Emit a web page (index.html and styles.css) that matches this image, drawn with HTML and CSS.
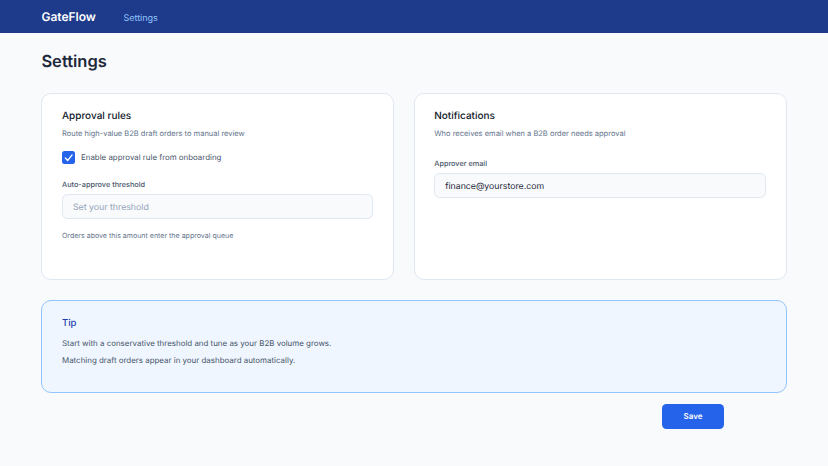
FILE: index.html
```html
<!DOCTYPE html>
<html lang="en">
<head>
<meta charset="utf-8">
<title>GateFlow Settings</title>
<link rel="stylesheet" href="styles.css">
</head>
<body>
<header class="topbar">
  <span class="brand">GateFlow</span>
  <a class="nav-link">Settings</a>
</header>
<main class="page">
  <h1 class="page-title">Settings</h1>
  <div class="cards">
    <section class="card">
      <h2 class="card-title">Approval rules</h2>
      <p class="card-sub">Route high-value B2B draft orders to manual review</p>
      <div class="check-row">
        <span class="checkbox">
          <svg viewBox="0 0 24 24" width="13.5" height="13.5"><path d="M6 12.5l4 4.5 8-10" fill="none" stroke="#fff" stroke-width="2.4" stroke-linecap="round" stroke-linejoin="round"/></svg>
        </span>
        <span class="check-label">Enable approval rule from onboarding</span>
      </div>
      <label class="field-label">Auto-approve threshold</label>
      <div class="input placeholder">Set your threshold</div>
      <p class="hint">Orders above this amount enter the approval queue</p>
    </section>
    <section class="card">
      <h2 class="card-title">Notifications</h2>
      <p class="card-sub">Who receives email when a B2B order needs approval</p>
      <label class="field-label email-label">Approver email</label>
      <div class="input">finance@yourstore.com</div>
    </section>
  </div>
  <section class="tip">
    <h3 class="tip-title">Tip</h3>
    <p class="tip-line">Start with a conservative threshold and tune as your B2B volume grows.</p>
    <p class="tip-line">Matching draft orders appear in your dashboard automatically.</p>
  </section>
  <div class="actions">
    <button class="save">Save</button>
  </div>
</main>
</body>
</html>
```
FILE: styles.css
```css
html { background: #f8fafc; }
* { box-sizing: border-box; }
body {
  margin: 0;
  font-family: Inter, "Liberation Sans", sans-serif;
  color: #0f172a;
  text-rendering: geometricPrecision;
  overflow: hidden;
  height: 466px;
}
.topbar {
  height: 33px;
  background: #1e3a8a;
  display: flex;
  align-items: center;
  gap: 27.5px;
  padding: 0 41.4px;
}
.brand { color: #fff; font-size: 12px; font-weight: 600; }
.nav-link { color: #93c5fd; font-size: 9px; font-weight: 400; padding-top: 3px; }
.page { padding: 17px 41.4px 0; }
.page-title { margin: 0 0 21.3px; font-size: 16.5px; line-height: 22px; font-weight: 600; color: #1e293b; }
.cards { display: grid; grid-template-columns: 3526fr 3734fr; gap: 20px; }
.card {
  height: 186.6px;
  background: #fff;
  border: 1px solid #dfe7f2;
  border-radius: 10px;
  padding: 14px 19.6px;
}
.card-title { margin: 0; font-size: 10px; line-height: 16px; font-weight: 500; color: #0f172a; }
.card-sub { margin: 4px 0 0; font-size: 7.5px; line-height: 11px; color: #64748b; }
.check-row { display: flex; align-items: center; gap: 5.5px; margin-top: 11.5px; }
.checkbox {
  width: 13.5px; height: 13.5px;
  background: #2563eb;
  border-radius: 2.5px;
  display: block;
}
.checkbox svg { display: block; }
.check-label { font-size: 7.9px; line-height: 13.5px; color: #475569; }
.field-label { display: block; margin-top: 16px; font-size: 7.3px; line-height: 10px; font-weight: 500; color: #475569; }
.email-label { margin-top: 20px; }
.input {
  height: 25.5px;
  margin-top: 3.5px;
  padding: 2px 10px 0;
  background: #f8fafc;
  border: 1px solid #dfe7f2;
  border-radius: 5.5px;
  display: flex;
  align-items: center;
  font-size: 8.75px;
  color: #1e293b;
}
.placeholder { color: #94a3b8; }
.hint { margin: 12px 0 0; font-size: 7.05px; line-height: 10px; color: #64748b; }
.tip {
  height: 93.6px;
  margin-top: 20px;
  background: #eff6ff;
  border: 1px solid #93c5fd;
  border-radius: 10px;
  padding: 16.5px 19.6px;
}
.tip-title { margin: 0; font-size: 9.5px; line-height: 13px; font-weight: 500; color: #1e40af; }
.tip-line { margin: 6.5px 0 0; font-size: 7.93px; line-height: 13px; color: #475569; }
.tip-line + .tip-line { margin-top: 4px; }
.actions { display: flex; justify-content: flex-end; padding: 10.4px 62.3px 0 0; }
.save {
  width: 62.7px; height: 25.2px;
  background: #2563eb;
  border: 0;
  border-radius: 4.5px;
  color: #fff;
  font: 600 8px Inter, "Liberation Sans", sans-serif;
  text-rendering: geometricPrecision;
}
```
